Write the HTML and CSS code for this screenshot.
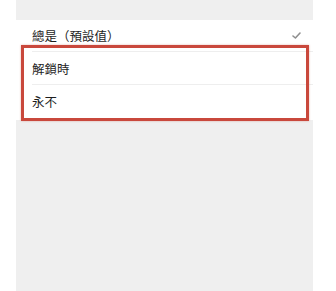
FILE: index.html
```html
<!DOCTYPE html>
<html lang="zh-Hant">
<head>
    <meta charset="UTF-8">
    <meta name="viewport" content="width=device-width, initial-scale=1.0">
    <title>自動鎖定</title>
    <link rel="stylesheet" href="styles.css">
</head>
<body>
    <div class="screen">
        <div class="top-band"></div>
        <ul class="options">
            <li class="option">
                <span>總是（預設值）</span>
                <svg class="check" width="9" height="7" viewBox="0 0 9 7" aria-hidden="true">
                    <path d="M1 4 L3.4 6 L8 1" fill="none" stroke="#8f8f8f" stroke-width="1.6" stroke-linecap="round" stroke-linejoin="round"/>
                </svg>
            </li>
            <li class="option">解鎖時</li>
            <li class="option">永不</li>
        </ul>
        <div class="highlight"></div>
        <div class="bottom-fill"></div>
    </div>
</body>
</html>
```

FILE: styles.css
```css
body, html {
    height: 100%;
    margin: 0;
    background-color: #ffffff;
    font-family: "Noto Sans CJK TC", "Noto Sans", sans-serif;
}
.screen {
    position: relative;
    margin: 0 23px 0 16px;
    height: 100%;
    display: flex;
    flex-direction: column;
    background-color: #efefef;
}
.top-band {
    height: 20px;
}
.options {
    list-style: none;
    margin: 0;
    padding: 0 0 3px 16px;
    background-color: #ffffff;
}
.option {
    height: 32px;
    display: flex;
    align-items: center;
    justify-content: space-between;
    padding-right: 12px;
    font-size: 12.5px;
    color: #1e1e1e;
    border-bottom: 1px solid #eeeeee;
}
.option:first-child {
    height: 31px;
}
.option:last-child {
    border-bottom: none;
}
.check {
    display: block;
}
.bottom-fill {
    flex: 1;
}
/* annotation frame drawn over the two rows */
.highlight {
    position: absolute;
    left: 5px;
    right: 4px;
    top: 45px;
    height: 70px;
    border: 3px solid #c9483c;
    box-shadow: 0 0 2px rgba(201, 72, 60, 0.4);
}
```
